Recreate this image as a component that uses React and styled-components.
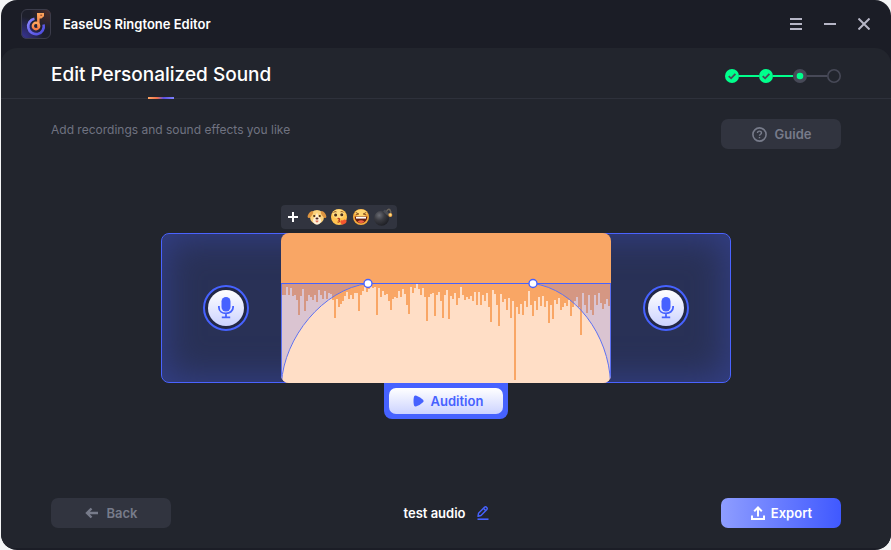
import styled, { createGlobalStyle } from "styled-components"

const GlobalStyle = createGlobalStyle`
    * {
        box-sizing: border-box;
    }
    body {
        margin: 0;
        background-color: #f4f5f6;
        font-family: 'Inter', sans-serif;
        color: #ffffff;
    }
    button {
        border: none;
        padding: 0;
        font-family: inherit;
        cursor: pointer;
    }
`

// depth of each bar, measured down from the volume line
const wave = [
    12, 12, 4, 12, 5, 13, 12, 17, 32, 13, 6, 28, 18, 12, 14, 17, 12, 19, 7, 12, 16, 8, 16, 10, 11, 17, 35, 16, 24, 21, 18, 13,
    9, 16, 12, 16, 10, 10, 28, 12, 8, 4, 9, 6, 1, 5, 4, 32, 5, 14, 8, 12, 11, 18, 27, 16, 14, 15, 8, 14, 6, 11, 22, 31, 4, 10,
    5, 1, 6, 12, 5, 14, 38, 14, 11, 10, 33, 12, 9, 18, 35, 12, 7, 36, 13, 16, 10, 22, 15, 4, 12, 17, 14, 16, 13, 18, 9, 22,
    9, 22, 12, 18, 10, 24, 39, 7, 11, 22, 43, 11, 19, 16, 27, 15, 35, 18, 97, 24, 31, 21, 32, 18, 24, 8, 22, 33, 18, 27, 14, 23,
    13, 24, 18, 40, 22, 36, 17, 21, 15, 27, 24, 20, 23, 17, 33, 24, 18, 14, 24, 52, 10, 22, 30, 12, 27, 32, 12, 22, 10, 20, 26,
    21, 16, 23
]

function waveOutline(){
    let path = "M0 100"
    wave.forEach((depth, index) => {
        path += `V${depth}H${index * 2 + 3}`
    })
    return path + "H330V100Z"
}

const steps = ["done", "done", "current", "next"]

export default function App(){
    return (
        <Window>
            <GlobalStyle />
            <TitleBar>
                <Logo />
                <AppName>EaseUS Ringtone Editor</AppName>
                <WindowButtons>
                    <WindowButton aria-label="Menu">
                        <svg width="12" height="12"><path d="M0 1h12M0 6h12M0 11h12" /></svg>
                    </WindowButton>
                    <WindowButton aria-label="Minimize">
                        <svg width="12" height="12"><path d="M0 6h12" /></svg>
                    </WindowButton>
                    <WindowButton aria-label="Close">
                        <svg width="12" height="12"><path d="M.5.5l11 11M11.5.5l-11 11" /></svg>
                    </WindowButton>
                </WindowButtons>
            </TitleBar>

            <Panel>
                <Header>
                    <Title>Edit Personalized Sound</Title>
                    <Steps>
                        {steps.map((state, index) => (
                            <Step key={index} $state={state}>
                                <StepMark state={state} />
                            </Step>
                        ))}
                    </Steps>
                </Header>

                <Intro>
                    <Hint>Add recordings and sound effects you like</Hint>
                    <Button>
                        <HelpIcon />
                        Guide
                    </Button>
                </Intro>

                <Stage>
                    <Editor>
                        <Effects>
                            <EffectButton $first aria-label="Add effect">
                                <svg width="10" height="10"><path d="M5 0v10M0 5h10" stroke="#fff" strokeWidth="2" /></svg>
                            </EffectButton>
                            <EffectButton aria-label="Dog"><DogIcon /></EffectButton>
                            <EffectButton aria-label="Kiss"><KissIcon /></EffectButton>
                            <EffectButton aria-label="Laugh"><LaughIcon /></EffectButton>
                            <EffectButton aria-label="Bomb"><BombIcon /></EffectButton>
                        </Effects>
                        <Track>
                            <RecordSlot $side="left">
                                <RecordButton aria-label="Record intro"><MicIcon /></RecordButton>
                            </RecordSlot>
                            <Clip>
                                <Waveform />
                            </Clip>
                            <RecordSlot $side="right">
                                <RecordButton aria-label="Record outro"><MicIcon /></RecordButton>
                            </RecordSlot>
                        </Track>
                        <AuditionTab>
                            <AuditionButton>
                                <svg width="11" height="12" viewBox="0 0 11 12">
                                    <path d="M.8 2.5Q1-.2 3.5.7Q7.5 2.2 10 4.7Q11.2 6 10 7.3Q7.5 9.8 3.5 11.3Q1 12.2.8 9.5Q.2 6 .8 2.5Z" fill="#4662ff" />
                                </svg>
                                Audition
                            </AuditionButton>
                        </AuditionTab>
                    </Editor>
                </Stage>

                <Footer>
                    <Button>
                        <svg width="13" height="12" viewBox="0 0 13 12" fill="none" stroke="currentColor" strokeWidth="2.4">
                            <path d="M13 6H2M6.5 1.5L2 6l4.5 4.5" />
                        </svg>
                        Back
                    </Button>
                    <FileName>
                        test audio
                        <RenameButton aria-label="Rename"><PencilIcon /></RenameButton>
                    </FileName>
                    <Button $primary>
                        <svg width="14" height="14" viewBox="0 0 14 14" fill="none" stroke="currentColor" strokeWidth="2">
                            <path d="M7 10.5V2M3.2 5.3L7 1.5l3.8 3.8M1 9.5V13h12V9.5" />
                        </svg>
                        Export
                    </Button>
                </Footer>
            </Panel>
        </Window>
    )
}

function Logo(){
    return (
        <svg width="30" height="30" viewBox="0 0 30 30" fill="none">
            <defs>
                <radialGradient id="logoBlue" cx="0" cy="1" r=".75">
                    <stop stopColor="#3a35a0" />
                    <stop offset="1" stopColor="#3a35a0" stopOpacity="0" />
                </radialGradient>
                <radialGradient id="logoRed" cx="1" cy="0" r=".7">
                    <stop stopColor="#54302c" />
                    <stop offset="1" stopColor="#54302c" stopOpacity="0" />
                </radialGradient>
                <linearGradient id="logoRing" x1="0" y1="0" x2="1" y2="1">
                    <stop stopColor="#8b86ff" />
                    <stop offset="1" stopColor="#4a48dc" />
                </linearGradient>
                <linearGradient id="logoNote" x1="0" y1="0" x2="0" y2="1">
                    <stop stopColor="#ffa65c" />
                    <stop offset="1" stopColor="#f57a45" />
                </linearGradient>
            </defs>
            <rect width="30" height="30" rx="6" fill="#1d1f2b" />
            <rect width="30" height="30" rx="6" fill="url(#logoBlue)" />
            <rect width="30" height="30" rx="6" fill="url(#logoRed)" />
            <rect x=".5" y=".5" width="29" height="29" rx="5.5" stroke="#3b3c4a" />
            <path d="M13.5 9.7A7.8 7.8 0 1 0 22.6 15.5" stroke="url(#logoRing)" strokeWidth="2.6" />
            <path d="M16 4h7v3.2l-2.6 2.2h-1.8V18h-2.4z" fill="url(#logoNote)" />
            <circle cx="15" cy="17" r="3.2" stroke="url(#logoNote)" strokeWidth="2.4" />
            <path d="M19.3 6.2h1.8" stroke="#7c3b2c" />
        </svg>
    )
}

function StepMark({ state }){
    return (
        <svg width="14" height="14" viewBox="0 0 14 14" fill="none">
            {state === "done" && (
                <>
                    <circle cx="7" cy="7" r="7" fill="#00ff8c" />
                    <path d="M3.7 7.1l2.4 2.2 4.3-4.5" stroke="#474b58" strokeWidth="1.8" />
                </>
            )}
            {state === "current" && (
                <>
                    <circle cx="7" cy="7" r="7" fill="#474957" />
                    <circle cx="7" cy="7" r="3.3" fill="#00ff8c" />
                </>
            )}
            {state === "next" && <circle cx="7" cy="7" r="6.2" stroke="#474957" strokeWidth="1.6" />}
        </svg>
    )
}

function HelpIcon(){
    return (
        <svg width="15" height="15" viewBox="0 0 15 15" fill="none" stroke="currentColor" strokeWidth="1.6">
            <circle cx="7.5" cy="7.5" r="6.6" />
            <path d="M5.5 6.1c0-2.6 4-2.5 4-.2 0 1.4-2 1.3-2 2.9M7.5 9.9v1.4" strokeWidth="1.4" />
        </svg>
    )
}

function MicIcon(){
    return (
        <svg width="16" height="22" viewBox="0 0 16 22" fill="none" stroke="#4662ff" strokeWidth="1.8">
            <rect x="3.5" y="0" width="9" height="14.5" rx="4.5" fill="#4662ff" stroke="none" />
            <path d="M.9 9v1.2c0 8.2 14.2 8.2 14.2 0V9M8 16.5v4M3.8 20.4h8.4" />
        </svg>
    )
}

function PencilIcon(){
    return (
        <svg width="12" height="14" viewBox="0 0 12 14" fill="none" stroke="#4662ff" strokeWidth="1.4">
            <path d="M1 10.3l.5-3L7.7 1.1Q8.7.4 9.7 1.4t.2 2L4 9.5z" strokeLinejoin="round" />
            <path d="M6.6 2.5l2.1 2.1" />
            <path d="M.5 13.2h11" strokeWidth="1.6" />
        </svg>
    )
}

function DogIcon(){
    return (
        <svg width="20" height="18" viewBox="0 0 20 18">
            <ellipse cx="10" cy="9" rx="7" ry="7" fill="#fbd27c" />
            <path d="M10 4.5l1.6 4.5a4 4 0 1 1-3.2 0z" fill="#fff0d8" />
            <path d="M5.5 3C2.5 3.5.8 6.5.6 9c.5 1.8 2.7 1 3.7-.8C5.8 6.5 7 4.2 5.5 3zM14.5 3c3 .5 4.7 3.5 4.9 6-.5 1.8-2.7 1-3.7-.8C14.2 6.5 13 4.2 14.5 3z" fill="#dc9440" />
            <circle cx="7.2" cy="8" r="1.1" fill="#3f2818" />
            <circle cx="12.8" cy="8" r="1.1" fill="#3f2818" />
            <ellipse cx="10" cy="10.5" rx="1.5" ry="1.1" fill="#4a2626" />
            <path d="M8.5 12.5h3q0 2-1.5 2t-1.5-2z" fill="#e2745b" />
        </svg>
    )
}

function KissIcon(){
    return (
        <svg width="18" height="18" viewBox="0 0 18 18">
            <circle cx="9" cy="9" r="8" fill="#ffc350" />
            <ellipse cx="8.5" cy="6" rx="6" ry="4.5" fill="#ffdc82" />
            <circle cx="5.6" cy="7" r="1.5" fill="#4c2f1b" />
            <circle cx="11.8" cy="6.7" r="1.5" fill="#4c2f1b" />
            <path d="M3.5 4.5q1.5-1.5 3-.6M10.5 3.8q1.8-.8 3 .6" stroke="#9a5a22" fill="none" />
            <path d="M7.5 10.5c3-.5 2.5 1.5.8 1.7 2 .3 1.7 2.3-.8 1.8" stroke="#b23a22" strokeWidth="1.2" fill="none" />
            <path d="M12.5 16.8c-3.5-2-2.3-5.5.3-4.3 2-2.3 4.7-.2 3.5 1.8-.8 1.4-2.3 2-3.8 2.5z" fill="#f2562f" />
        </svg>
    )
}

function LaughIcon(){
    return (
        <svg width="18" height="18" viewBox="0 0 18 18">
            <circle cx="9" cy="9" r="8" fill="#f9ad3e" />
            <ellipse cx="9" cy="5" rx="6" ry="3.5" fill="#ffd670" />
            <path d="M3.8 4.5l3 1.5-3 .8M14.2 4.5l-3 1.5 3 .8" stroke="#7a4018" strokeWidth=".9" fill="none" />
            <path d="M2.7 8.5h12.6c0 9-12.600 9-12.600 0z" fill="#672012" />
            <path d="M4 8.8h10v1.8H4z" fill="#fff" />
            <path d="M5.5 13.5q3.5-2.5 7 0-3.5 3-7 0z" fill="#ef6145" />
        </svg>
    )
}

function BombIcon(){
    return (
        <svg width="20" height="18" viewBox="0 0 20 18">
            <defs>
                <radialGradient id="bombBody" cx=".35" cy=".3" r=".75">
                    <stop stopColor="#6a6c74" />
                    <stop offset=".45" stopColor="#3a3b42" />
                    <stop offset="1" stopColor="#1d1e23" />
                </radialGradient>
            </defs>
            <circle cx="8.5" cy="10.3" r="7.5" fill="url(#bombBody)" />
            <path d="M10 3.3l4.5 4.5 2-2L12 1.5z" fill="#4b4d55" />
            <path d="M13.5 3.5q2-3.5 3.5-1.5t.3 4" stroke="#6b655c" strokeWidth="1.4" fill="none" />
            <circle cx="17.3" cy="7" r="2" fill="#f0a94b" />
            <circle cx="17.3" cy="6.8" r="1" fill="#ffe58b" />
        </svg>
    )
}

function Waveform(){
    return (
        <WaveSvg viewBox="0 0 330 150" preserveAspectRatio="none" fill="none">
            <g transform="translate(0 50)">
                <path d={waveOutline()} fill="#ffdec6" shapeRendering="crispEdges" />
                <path d="M0 0V100C3 55 42 6 87 0ZM330 0V100C328 52 294 6 252 0Z" fill="#465fff" fillOpacity=".2" />
                <path d="M.5 0V100C3 55 42 6 87 .5M329.5 0V100C328 52 294 6 252 .5" stroke="#5c70f2" />
                <path d="M0 .5H330" stroke="#4662ff" />
                <circle cx="87" cy=".5" r="4" fill="#fff" stroke="#4662ff" strokeWidth="1.4" />
                <circle cx="252" cy=".5" r="4" fill="#fff" stroke="#4662ff" strokeWidth="1.4" />
            </g>
        </WaveSvg>
    )
}

const Window = styled.div`
    display: flex;
    flex-direction: column;
    min-height: 100vh;
    margin-left: 1px;
    padding-bottom: 2px;
    border-radius: 16px;
    overflow: hidden;
    background-color: #1b1d26;
`

const TitleBar = styled.header`
    display: flex;
    align-items: center;
    height: 48px;
    padding: 0 20px;
`

const AppName = styled.div`
    margin-left: 12px;
    font-size: 13px;
    font-weight: 600;
    line-height: 20px;
`

const WindowButtons = styled.div`
    display: flex;
    gap: 10px;
    margin-left: auto;
    margin-right: -5px;
`

const WindowButton = styled.button`
    display: flex;
    align-items: center;
    justify-content: center;
    width: 24px;
    height: 24px;
    background: none;
    svg {
        stroke: #b6b6c6;
        stroke-width: 2px;
    }
`

const Panel = styled.main`
    flex: 1;
    display: flex;
    flex-direction: column;
    border-radius: 16px 16px 0 0;
    background-color: #22252d;
`

const Header = styled.div`
    display: flex;
    align-items: center;
    justify-content: space-between;
    height: 51px;
    padding: 0 50px;
    border-bottom: 1px solid #2e313b;
`

const Title = styled.h1`
    position: relative;
    margin: 0;
    padding-top: 4px;
    font-size: 19px;
    font-weight: 500;
    line-height: 46px;
    &::after {
        content: "";
        position: absolute;
        left: 50%;
        bottom: -1px;
        width: 26px;
        height: 2px;
        margin-left: -13px;
        background: linear-gradient(90deg, #ffa663, #f0704c 35%, #5a4fe0 60%, #7f83ff);
    }
`

const Steps = styled.ol`
    display: flex;
    margin: 0;
    padding: 6px 0 0;
    list-style: none;
`

const Step = styled.li`
    display: flex;
    align-items: center;
    &:not(:last-child)::after {
        content: "";
        width: 20px;
        height: 2px;
        background-color: ${({ $state }) => $state === "done" ? "#00ff8c" : "#474957"};
    }
`

const Intro = styled.div`
    display: flex;
    justify-content: space-between;
    align-items: flex-start;
    padding: 20px 50px 0;
`

const Hint = styled.p`
    margin: 0;
    color: #707381;
    font-size: 12px;
    line-height: 22px;
`

const Button = styled.button`
    display: flex;
    align-items: center;
    justify-content: center;
    gap: ${({ $primary }) => $primary ? "6px" : "8px"};
    width: 120px;
    height: 30px;
    padding-left: 1px;
    border-radius: 7px;
    font-size: 13px;
    font-weight: 600;
    color: ${({ $primary }) => $primary ? "#ffffff" : "#777b8a"};
    background: ${({ $primary }) => $primary ? "linear-gradient(90deg, #8e9dff, #4059ff)" : "#31343f"};
`

const Stage = styled.section`
    flex: 1;
    display: flex;
    justify-content: center;
    padding: 56px 50px 40px;
`

const Editor = styled.div`
    display: flex;
    flex-direction: column;
    width: 100%;
    max-width: 570px;
`

const Effects = styled.div`
    display: flex;
    align-self: flex-start;
    height: 24px;
    margin: 0 0 4px 120px;
    padding-right: 3px;
    border-radius: 4px;
    background-color: #31343f;
`

const EffectButton = styled.button`
    display: flex;
    align-items: center;
    justify-content: center;
    width: ${({ $first }) => $first ? "25px" : "22px"};
    padding-right: ${({ $first }) => $first ? "1px" : "0"};
    background: none;
`

const Track = styled.div`
    display: flex;
    height: 150px;
    border: 1px solid #4a63ff;
    border-radius: 8px;
    background-color: #293156;
    box-shadow: inset 0 0 36px 2px #34408a;
`

const RecordSlot = styled.div`
    display: flex;
    align-items: center;
    justify-content: center;
    width: 119px;
    padding-left: ${({ $side }) => $side === "left" ? "9px" : "0"};
    padding-right: ${({ $side }) => $side === "right" ? "9px" : "0"};
`

const RecordButton = styled.button`
    display: flex;
    align-items: center;
    justify-content: center;
    width: 46px;
    height: 46px;
    padding: 3px;
    border: 2px solid #4662ff;
    border-radius: 50%;
    background: linear-gradient(180deg, #ffffff, #ccd3ff) content-box, #232846;
`

const Clip = styled.div`
    flex: 1;
    min-width: 0;
    margin: -1px 0;
    border-radius: 8px;
    overflow: hidden;
    background-color: #f9a665;
`

const WaveSvg = styled.svg`
    display: block;
    width: 100%;
    height: 150px;
`

const AuditionTab = styled.div`
    align-self: center;
    padding: 5px;
    border-radius: 0 0 8px 8px;
    background-color: #4662ff;
`

const AuditionButton = styled.button`
    display: flex;
    align-items: center;
    justify-content: center;
    gap: 7px;
    width: 114px;
    height: 26px;
    padding-left: 4px;
    border-radius: 7px;
    background: linear-gradient(180deg, #ffffff, #ccd3ff);
    color: #4662ff;
    font-size: 13px;
    font-weight: 600;
`

const Footer = styled.footer`
    display: flex;
    align-items: center;
    justify-content: space-between;
    padding: 0 50px 20px;
`

const FileName = styled.div`
    display: flex;
    align-items: center;
    gap: 11px;
    font-size: 13px;
    font-weight: 600;
    line-height: 20px;
`

const RenameButton = styled.button`
    display: flex;
    background: none;
`
